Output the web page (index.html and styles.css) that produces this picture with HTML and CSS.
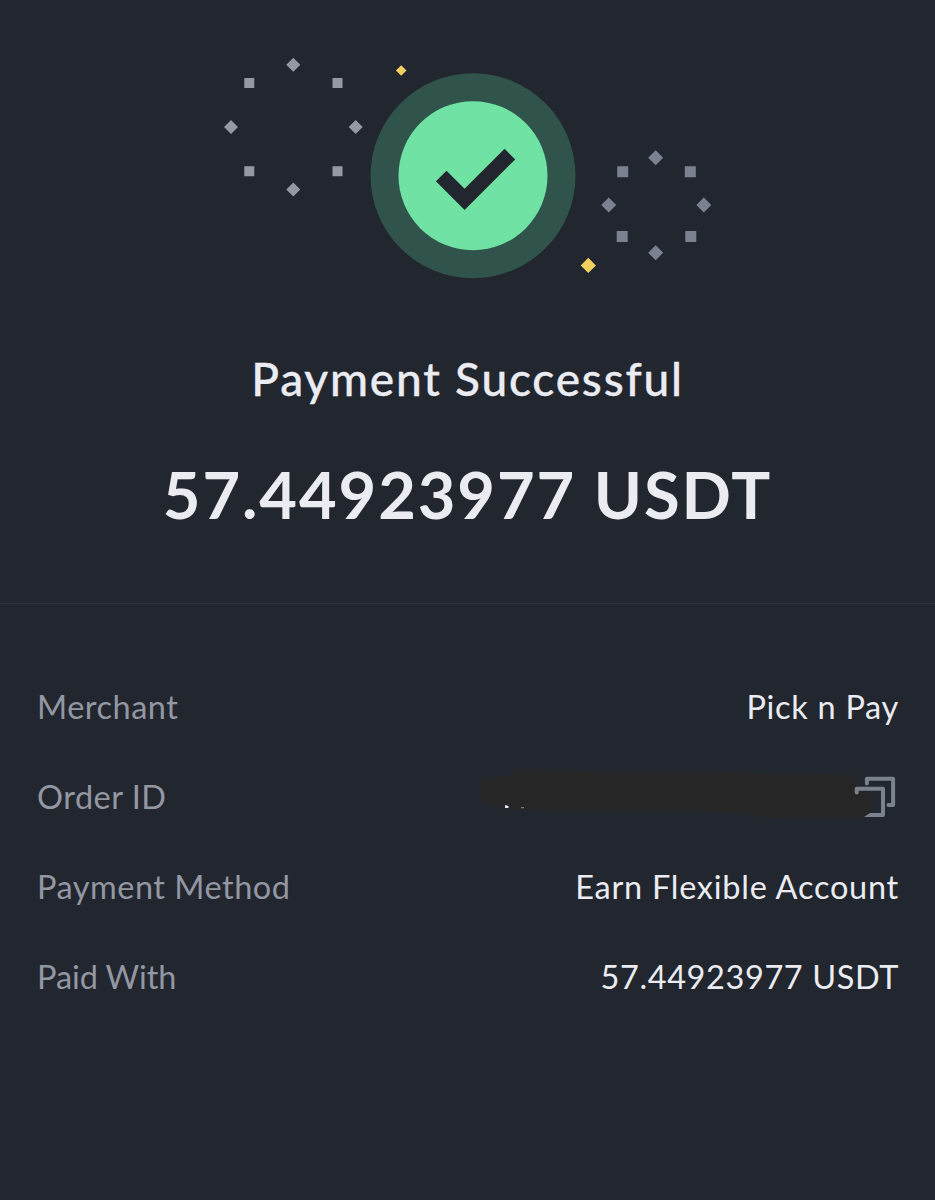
FILE: index.html
```html
<!DOCTYPE html>
<html lang="en">
<head>
    <meta charset="UTF-8">
    <meta name="viewport" content="width=device-width, initial-scale=1.0">
    <title>Payment Successful</title>
    <link rel="stylesheet" href="styles.css">
</head>
<body>

<div class="summary">
    <svg class="hero" viewBox="0 0 935 300" aria-hidden="true">
        <!-- left ring -->
        <g fill="#9599a4">
            <path d="M293.3 57.7l7 7-7 7-7-7zM355.7 120l7 7-7 7-7-7zM293.3 182.500l7 7-7 7-7-7zM231 120l7 7-7 7-7-7z"/>
            <path d="M244.300 78h10v10h-10zM332.500 78h10v10h-10zM244.300 166.200h10v10h-10zM332.500 166.200h10v10h-10z"/>
        </g>
        <!-- right ring -->
        <g fill="#7b8190">
            <path d="M655.700 150.200l7.500 7.500-7.500 7.500-7.500-7.500zM703.800 197.500l7.500 7.500-7.500 7.500-7.500-7.500zM655.700 245.300l7.500 7.500-7.500 7.500-7.500-7.500zM608.700 197.500l7.500 7.500-7.500 7.500-7.500-7.500z"/>
            <path d="M617.200 166.300h11v11h-11zM684.800 166.300h11v11h-11zM616.700 231h11v11h-11zM685.300 231h11v11h-11z"/>
        </g>
        <path fill="#f2d060" d="M401.200 65.200l5.300 5.300-5.300 5.300-5.300-5.300zM588.300 257.800l7.600 7.600-7.600 7.600-7.600-7.600z"/>
        <circle cx="473" cy="175.700" r="102.500" fill="#30544b"/>
        <circle cx="473" cy="175.700" r="74.500" fill="#70e2a4"/>
        <path fill="none" stroke="#22262f" stroke-width="15" d="M441.200 176l23.400 23.400 45.300-45.300"/>
    </svg>
    <h1 class="title">Payment Successful</h1>
    <div class="amount">57.44923977 USDT</div>
</div>

<div class="details">
    <div class="row">
        <span class="label">Merchant</span>
        <span class="value merchant">Pick n Pay</span>
    </div>
    <div class="row">
        <span class="label">Order ID</span>
        <!-- order number is scribbled out, copy icon at the end -->
        <svg class="order-id" viewBox="470 762 465 70" role="img" aria-label="Hidden order ID">
            <path fill="#262626" d="M482 780L512 775L514 769H550L600 772H720L780 774H815L836 776L842 773H853L855 779V789L870 793L872 798V811L868 815L862 818H780L750 815L710 811H550L510 809L482 803L480 799V784Z"/>
            <g fill="none" stroke="#7b818d" stroke-width="4" stroke-linecap="round" stroke-linejoin="round">
                <path d="M866.900 783.500v-4.700h26.200v26.200h-4.700"/>
                <path d="M856.700 792.500v-3.800h26.300v26.300h-11"/>
            </g>
            <path fill="#7b818d" d="M864 817l6-4h4v4z"/>
            <path fill="#e8eaef" d="M505 805l3.500 1v2h-3.500z"/>
            <path fill="#777b82" d="M521 807h3v1.300h-3z"/>
        </svg>
    </div>
    <div class="row">
        <span class="label">Payment Method</span>
        <span class="value account">Earn Flexible Account</span>
    </div>
    <div class="row">
        <span class="label paid-with">Paid With</span>
        <span class="value paid">57.44923977 USDT</span>
    </div>
</div>

</body>
</html>
```

FILE: styles.css
```css
* {
    box-sizing: border-box;
}

body {
    margin: 0;
    min-height: 100vh;
    background-color: #22262f;
    font-family: Lato, "Liberation Sans", sans-serif;
    color: #eaecf1;
    overflow: hidden;
}

.summary {
    height: 604px;
    border-bottom: 1px solid #2c3038;
    text-align: center;
}

.hero {
    display: block;
    width: 935px;
    height: 300px;
}

.title {
    margin: 49px 0 0;
    font-size: 46px;
    font-weight: 500;
    line-height: 60px;
    letter-spacing: 1.8px;
    -webkit-text-stroke: 0.3px #eaecf1;
}

.amount {
    margin-top: 45px;
    font-size: 65px;
    font-weight: 700;
    line-height: 80px;
    letter-spacing: 1.9px;
}

.details {
    padding: 58px 36px 0 37px;
}

.row {
    display: flex;
    align-items: center;
    justify-content: space-between;
    height: 90px;
    font-size: 32.5px;
    letter-spacing: 0.5px;
}

.label,
.value {
    padding-bottom: 2px;
}

.label {
    color: #9297a2;
}

.paid-with {
    letter-spacing: -0.1px;
}

.merchant {
    letter-spacing: 0.7px;
}

.account {
    letter-spacing: 0.75px;
}

.paid {
    letter-spacing: 0.6px;
}

.order-id {
    width: 465px;
    height: 70px;
    margin-right: -36px;
}
```
